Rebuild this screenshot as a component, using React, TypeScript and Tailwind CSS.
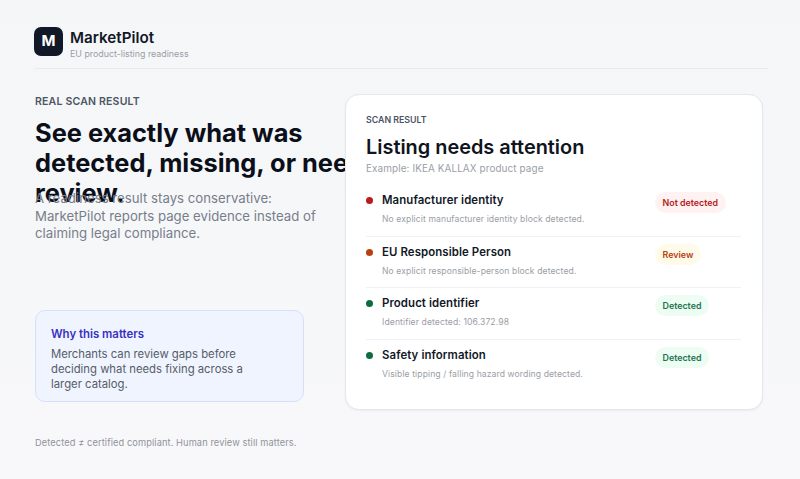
const rows = [
  { t: "Manufacturer identity", d: "No explicit manufacturer identity block detected.", b: "Not detected", dot: "bg-[#b91c1c]", pill: "bg-[#fef2f2] text-[#b91c1c]" },
  { t: "EU Responsible Person", d: "No explicit responsible-person block detected.", b: "Review", dot: "bg-[#b8400f]", pill: "bg-[#fffbeb] text-[#b8400f]" },
  { t: "Product identifier", d: "Identifier detected: 106.372.98", b: "Detected", dot: "bg-[#0f6b41]", pill: "bg-[#edfdf4] text-[#1f7350]" },
  { t: "Safety information", d: "Visible tipping / falling hazard wording detected.", b: "Detected", dot: "bg-[#0f6b41]", pill: "bg-[#edfdf4] text-[#1f7350]" },
];

export default function App() {
  return (
    <div className="h-[479px] w-[800px] overflow-hidden bg-gradient-to-b from-[#f4f6f8] to-[#f8f8fa] px-[35px] pt-[27px] font-['Inter',sans-serif]">
      <header className="flex h-[42px] w-[733px] items-start gap-2 border-b border-[#e8eaee]">
        <div className="-ml-px flex h-[29px] w-[29px] items-center justify-center rounded-[7px] bg-[#111827] text-[15px] font-bold text-white">M</div>
        <div className="flex flex-col">
          <span className="mt-[-1px] -ml-px text-[15.2px] leading-[24px] font-semibold text-[#111827]">MarketPilot</span>
          <span className="mt-[-2px] -ml-px text-[8.85px] leading-[12px] text-[#9a9ea6]">EU product-listing readiness</span>
        </div>
      </header>
      <div className="flex items-start">
        <section className="w-[310px] shrink-0 pt-[26px]">
          <p className="text-[10.5px] leading-[14px] font-semibold tracking-[0.2px] text-[#4b5563]">REAL SCAN RESULT</p>
          <h1 className="mt-[9px] h-[59px] w-[375px] text-[25.4px] leading-[30px] font-bold text-[#0b0f19]">See exactly what was detected, missing, or needs review.</h1>
          <p className="mt-[13px] w-[290px] text-[13.22px] leading-[17.6px] text-[#787e89]">A readiness result stays conservative: MarketPilot reports page evidence instead of claiming legal compliance.</p>
          <div className="mt-[67px] h-[92px] w-[269px] rounded-[10px] border border-[#d5e0fb] bg-[#eff4fe] px-[15px] py-[16px]">
            <p className="text-[11.4px] leading-[15px] font-semibold text-[#3730c3]">Why this matters</p>
            <p className="mt-[5px] w-[205px] text-[11.3px] leading-[15px] text-[#565d69]">Merchants can review gaps before deciding what needs fixing across a larger catalog.</p>
          </div>
          <p className="mt-[35px] text-[9.25px] leading-[12px] tracking-[0.1px] text-[#8f939b]">Detected ≠ certified compliant. Human review still matters.</p>
        </section>
        <section className="relative z-10 mt-[25px] h-[316px] w-[418px] rounded-[14px] border border-[#e5e7eb] bg-white px-[20px] pt-[19px] shadow-[0_1px_2px_rgba(17,24,39,0.05)]">
          <p className="text-[8.8px] leading-[12px] font-semibold text-[#4b5563]">SCAN RESULT</p>
          <h2 className="mt-[8px] text-[19.9px] leading-[26px] font-semibold text-[#0f1420]">Listing needs attention</h2>
          <p className="mt-[1px] text-[9.92px] leading-[14px] tracking-[0.1px] text-[#9a9ea6]">Example: IKEA KALLAX product page</p>
          <ul className="mt-[10px] w-[375px]">
            {rows.map((r) => (
              <li key={r.t} className="grid h-[51.67px] grid-cols-[289px_1fr] items-start border-b border-[#f0f1f4] pt-[7px] last:border-b-0">
                <div className="flex items-start gap-[9px]">
                  <span className={`mt-[5px] h-[7px] w-[7px] shrink-0 rounded-full ${r.dot}`} />
                  <div>
                    <p className="text-[11.4px] leading-[16px] font-semibold tracking-[0.1px] text-[#111827]">{r.t}</p>
                    <p className="mt-[5px] text-[8.6px] leading-[12px] tracking-[0.1px] text-[#9a9ea6]">{r.d}</p>
                  </div>
                </div>
                <span className={`justify-self-start rounded-full px-[7.5px] py-[4px] text-[8.9px] leading-[13px] font-semibold ${r.pill}`}>{r.b}</span>
              </li>
            ))}
          </ul>
        </section>
      </div>
    </div>
  );
}
